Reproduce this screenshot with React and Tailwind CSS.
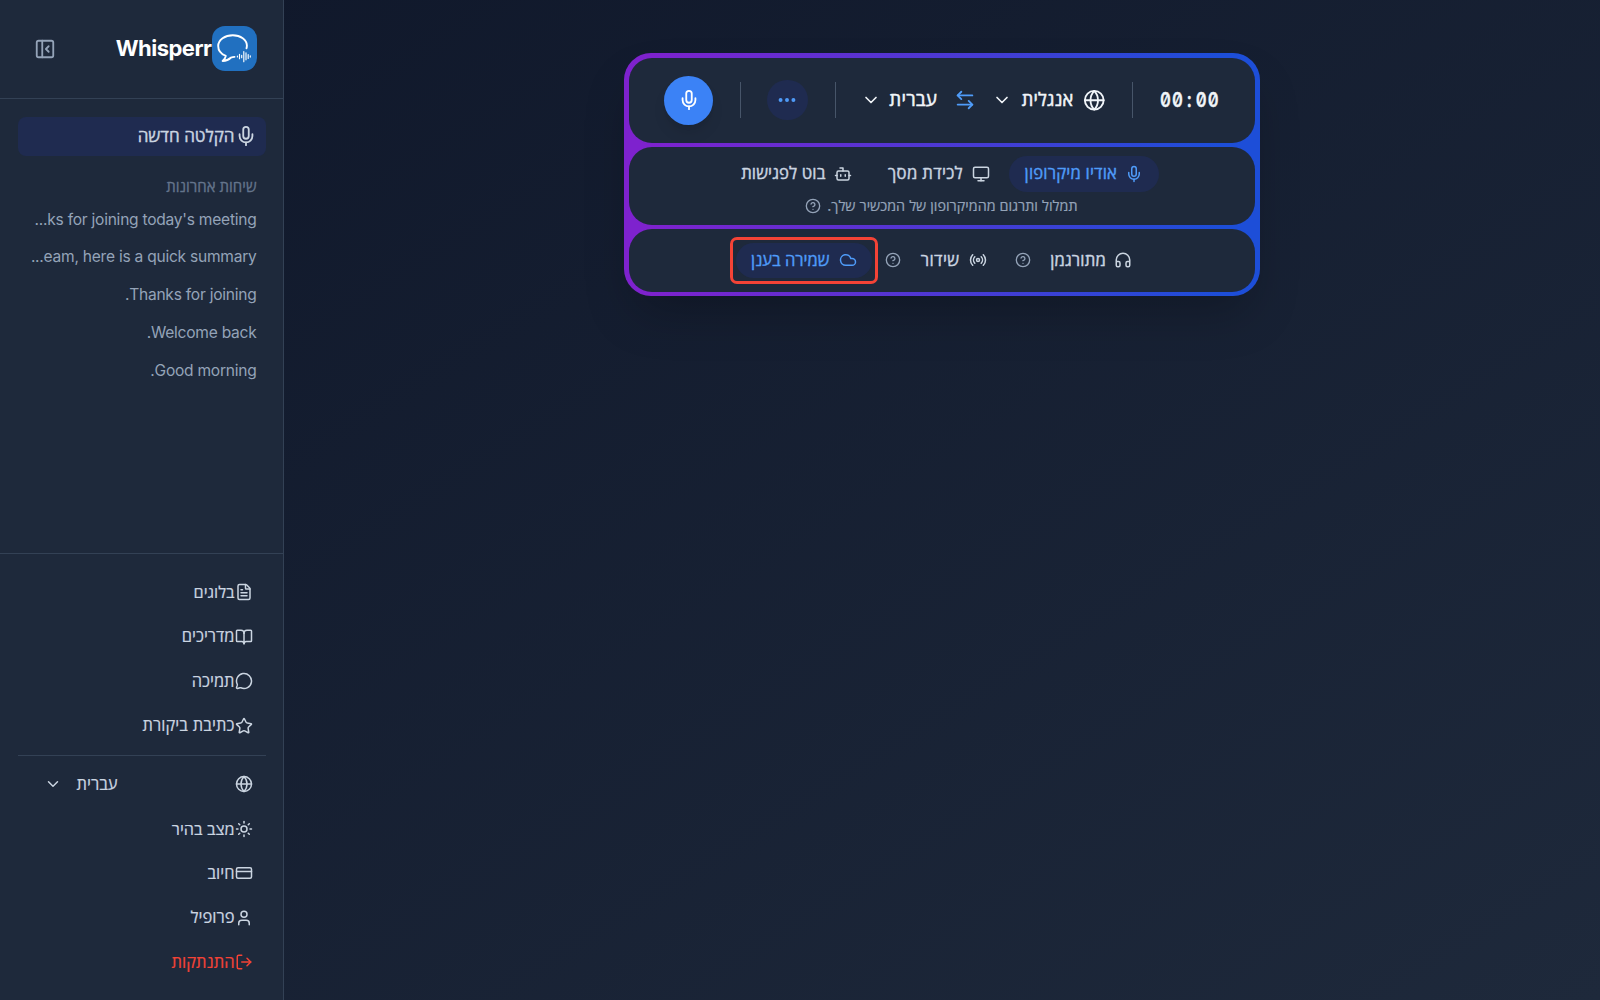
import React from "react";
import {
  PanelLeftClose, Mic, FileText, BookOpen, MessageCircle, Star, Globe, Sun,
  CreditCard, User, LogOut, ChevronDown, ArrowLeftRight, Ellipsis, Monitor,
  Bot, CircleHelp, Headphones, Radio, Cloud,
} from "lucide-react";

function Logo() {
  return (
    <svg viewBox="0 0 45 45" className="h-[45px] w-[45px] shrink-0" fill="none" stroke="#fff" strokeLinecap="round" strokeLinejoin="round">
      <rect width="45" height="45" rx="13" fill="#2170c0" stroke="none" />
      <path d="M34.5 22.300c.3-1 .4-2 .4-2.900 0-5.700-6.300-10.200-14.100-10.200S6.200 13.900 6.200 20c0 4.700 3 8.100 7.600 9.800-.4 2.300-1.500 3.900-3.200 5.200 3.600-.3 6.200-1.400 8.200-3.300 1.200-.4 2.200-.7 3.700-.8" strokeWidth="1.900" />
      <path d="M25.400 30v1M27.500 28.300v4.400M29.700 29.300v2.400M31.800 25.500v10.200M34 26.800v7M36.200 28.500v4M38.300 29.700v1.400" strokeWidth="1.150" />
    </svg>
  );
}

function NavItem({ icon: Icon, label, text, tone = "text-[#cbd5e1]" }) {
  return (
    <div className={"flex h-[44.5px] items-center pr-[13px] " + tone}>
      <Icon className="h-[18px] w-[18px] shrink-0" strokeWidth={2} />
      <span className={"whitespace-nowrap [-webkit-text-stroke:0.2px] " + text}>{label}</span>
    </div>
  );
}

function Sidebar() {
  return (
    <aside className="flex h-full w-[284px] shrink-0 flex-col border-r border-[#334155] bg-[#1e293b]">
      <div className="flex h-[98.500px] shrink-0 items-center justify-between border-b border-[#334155] pl-[33.500px] pr-[26.500px]">
        <div className="flex items-center">
          <Logo />
          <span className="text-[22px] font-bold tracking-[-0.500px] text-white">Whisperr</span>
        </div>
        <PanelLeftClose className="h-[22px] w-[22px] text-[#94a3b8]" />
      </div>
      <div className="pl-[18px] pr-[17.500px] pt-[18px]">
        <div className="flex h-[39.500px] items-center rounded-[8px] bg-[#1f2b50] pr-[9px] text-[#cbd5e1]">
          <Mic className="h-[22px] w-[22px] shrink-0" />
          <span className="whitespace-nowrap text-[17px] font-medium [-webkit-text-stroke:0.4px]">הקלטה חדשה</span>
        </div>
      </div>
      <div className="mt-[19.500px] flex h-[24px] items-center pr-[26.500px] text-[15px] font-medium text-[#64748b] [-webkit-text-stroke:0.3px]">שיחות אחרונות</div>
      <div className="mt-[1px] flex flex-col pr-[26.500px] text-[15.550px] tracking-[-0.240px] text-[#94a3b8]">
        <div className="flex h-[37.750px] items-center whitespace-nowrap">ks for joining today's meeting...</div>
        <div className="flex h-[37.750px] items-center whitespace-nowrap">eam, here is a quick summary...</div>
        <div className="flex h-[37.750px] items-center whitespace-nowrap">Thanks for joining.</div>
        <div className="flex h-[37.750px] items-center whitespace-nowrap">Welcome back.</div>
        <div className="flex h-[37.750px] items-center whitespace-nowrap">Good morning.</div>
      </div>
      <div className="mt-auto h-[447px] shrink-0 border-t border-[#334155] pl-[18px] pr-[17.500px] pt-[16px]">
        <NavItem icon={FileText} label="בלוגים" text="text-[16.200px]" />
        <NavItem icon={BookOpen} label="מדריכים" text="text-[16.400px]" />
        <NavItem icon={MessageCircle} label="תמיכה" text="text-[16.400px]" />
        <NavItem icon={Star} label="כתיבת ביקורת" text="text-[16.400px] tracking-[0.1px]" />
        <div className="mt-[7px] mb-[6px] border-t border-[#334155]" />
        <div className="flex h-[44.500px] items-center pr-[13px] text-[#cbd5e1]">
          <Globe className="h-[18px] w-[18px]" />
          <span className="mr-[117px] whitespace-nowrap text-[16.500px] [-webkit-text-stroke:0.2px]">עברית</span>
          <ChevronDown className="mr-auto ml-[26px] h-[18px] w-[18px]" />
        </div>
        <NavItem icon={Sun} label="מצב בהיר" text="text-[16.200px]" />
        <NavItem icon={CreditCard} label="חיוב" text="text-[16.400px]" />
        <NavItem icon={User} label="פרופיל" text="text-[16.500px]" />
        <NavItem icon={LogOut} label="התנתקות" text="text-[16.500px]" tone="text-[#f44336]" />
      </div>
    </aside>
  );
}

function Separator() {
  return <div className="h-[36px] w-px shrink-0 bg-[#475569]" />;
}

function RecorderPanel() {
  return (
    <section className="mt-[53px] flex h-[243px] w-[635.500px] flex-col gap-[4.500px] rounded-[27px] bg-[linear-gradient(90deg,#7e22ce_4%,#1d4ed8_94%)] p-[4.500px] shadow-2xl">
      <div className="flex h-[85px] shrink-0 items-center rounded-[23px] bg-[#1e293b] pr-[35px] text-[#f1f5f9]">
        <div className="w-[60px]" dir="ltr">
          <div className="origin-left scale-x-[0.82] whitespace-nowrap text-[20.500px] font-semibold tracking-[1.500px] [-webkit-text-stroke:0.3px] [font-feature-settings:'zero','tnum']">00<span className="mx-[3.500px]">:</span>00</div>
        </div>
        <div className="mr-[27px]"><Separator /></div>
        <Globe className="mr-[27px] h-[22.500px] w-[22.500px] shrink-0" />
        <span className="mr-[9px] w-[52px] whitespace-nowrap text-[18.200px] font-medium tracking-[0.200px] [-webkit-text-stroke:0.5px]">אנגלית</span>
        <ChevronDown className="mr-[9.500px] h-[20px] w-[20px] shrink-0" />
        <ArrowLeftRight className="mr-[16px] h-[22px] w-[22px] shrink-0 text-[#4f9cf9]" />
        <span className="mr-[17px] w-[49px] whitespace-nowrap text-[18.800px] font-medium tracking-[0.200px] [-webkit-text-stroke:0.5px]">עברית</span>
        <ChevronDown className="mr-[7.500px] h-[20px] w-[20px] shrink-0" />
        <div className="mr-[25px]"><Separator /></div>
        <div className="mr-[27px] flex h-[40.500px] w-[40.500px] shrink-0 items-center justify-center rounded-full bg-[#1f2b50] text-[#4f9cf9]">
          <Ellipsis className="h-[22px] w-[22px]" strokeWidth={2.300} />
        </div>
        <div className="mr-[26.500px]"><Separator /></div>
        <div className="mr-[26.500px] flex h-[49px] w-[49px] shrink-0 items-center justify-center rounded-full bg-[#3b82f6] text-white shadow-lg">
          <Mic className="h-[22px] w-[22px]" />
        </div>
      </div>
      <div className="flex h-[77.500px] shrink-0 flex-col rounded-[23px] bg-[#1e293b] pt-[8.500px]">
        <div className="flex h-[36px] items-center pr-[96.500px] text-[16.700px] font-medium text-[#cbd5e1] [-webkit-text-stroke:0.4px]">
          <div className="flex h-[36px] w-[149.500px] items-center rounded-full bg-[#1f2b50] pr-[15.500px] text-[#4f9cf9]">
            <Mic className="h-[18px] w-[18px] shrink-0" />
            <span className="mr-[8px] whitespace-nowrap tracking-[0.150px]">אודיו מיקרופון</span>
          </div>
          <Monitor className="mr-[19px] h-[18px] w-[18px] shrink-0" />
          <span className="mr-[9px] w-[76px] whitespace-nowrap tracking-[0.300px]">לכידת מסך</span>
          <Bot className="mr-[35px] h-[18px] w-[18px] shrink-0" />
          <span className="mr-[8.500px] whitespace-nowrap tracking-[0.100px]">בוט לפגישות</span>
        </div>
        <div className="flex h-[30px] items-center pr-[177.500px] pb-px text-[14.350px] text-[#94a3b8] [-webkit-text-stroke:0.2px]">
          <span className="w-[249px] whitespace-nowrap">תמלול ותרגום מהמיקרופון של המכשיר שלך.</span>
          <CircleHelp className="mr-[8px] h-[16px] w-[16px] shrink-0" />
        </div>
      </div>
      <div className="flex h-[62.500px] shrink-0 items-center rounded-[23px] bg-[#1e293b] pr-[123px] text-[16.700px] font-medium text-[#cbd5e1] [-webkit-text-stroke:0.4px]">
        <Headphones className="h-[18px] w-[18px] shrink-0" />
        <span className="mr-[8px] w-[56px] whitespace-nowrap tracking-[0.150px]">מתורגמן</span>
        <CircleHelp className="mr-[19px] h-[16px] w-[16px] shrink-0 text-[#94a3b8]" />
        <Radio className="mr-[28.500px] h-[18px] w-[18px] shrink-0" />
        <span className="mr-[9px] w-[39px] whitespace-nowrap tracking-[0.400px]">שידור</span>
        <CircleHelp className="mr-[19.500px] h-[16px] w-[16px] shrink-0 text-[#94a3b8]" />
        <div className="mr-[7.500px] h-[47.500px] w-[147.500px] shrink-0 rounded-[7px] border-[3px] border-[#f44336] p-[3px]">
          <div className="flex h-full items-center rounded-full bg-[#1f2b50] pr-[15px] text-[#4f9cf9]">
            <Cloud className="h-[18px] w-[18px] shrink-0" />
            <span className="mr-[9px] whitespace-nowrap text-[16.500px]">שמירה בענן</span>
          </div>
        </div>
      </div>
    </section>
  );
}

export default function App() {
  return (
    <div dir="rtl" className="flex h-[1000px] w-[1600px] flex-row-reverse overflow-hidden bg-[linear-gradient(to_bottom_right,#0f172a,#1e293b)] font-['Inter','Open_Sans',sans-serif]">
      <Sidebar />
      <main className="flex flex-1 flex-col items-start pr-[340.500px]">
        <RecorderPanel />
      </main>
    </div>
  );
}
